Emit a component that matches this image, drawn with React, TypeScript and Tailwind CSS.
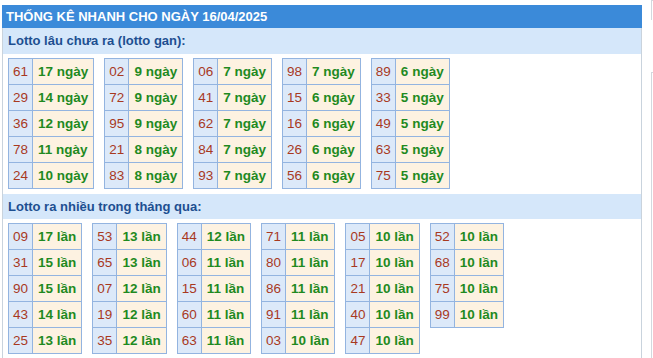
import React from "react";

const gan: [string, string][][] = [
  [["61", "17"], ["29", "14"], ["36", "12"], ["78", "11"], ["24", "10"]],
  [["02", "9"], ["72", "9"], ["95", "9"], ["21", "8"], ["83", "8"]],
  [["06", "7"], ["41", "7"], ["62", "7"], ["84", "7"], ["93", "7"]],
  [["98", "7"], ["15", "6"], ["16", "6"], ["26", "6"], ["56", "6"]],
  [["89", "6"], ["33", "5"], ["49", "5"], ["63", "5"], ["75", "5"]],
];

const nhieu: [string, string][][] = [
  [["09", "17"], ["31", "15"], ["90", "15"], ["43", "14"], ["25", "13"]],
  [["53", "13"], ["65", "13"], ["07", "12"], ["19", "12"], ["35", "12"]],
  [["44", "12"], ["06", "11"], ["15", "11"], ["60", "11"], ["63", "11"]],
  [["71", "11"], ["80", "11"], ["86", "11"], ["91", "11"], ["03", "10"]],
  [["05", "10"], ["17", "10"], ["21", "10"], ["40", "10"], ["47", "10"]],
  [["52", "10"], ["68", "10"], ["75", "10"], ["99", "10"]],
];

function LTable({ rows, unit }: { rows: [string, string][]; unit: string }) {
  return (
    <table className="border-collapse self-start">
      <tbody>
        {rows.map(([n, v], i) => (
          <tr key={i} className="h-[26px]">
            <td className="border border-[#93b4e0] bg-[#dce9f9] px-[4px] py-0 text-[13.5px] leading-[15px] text-[#a8391f]">
              {n}
            </td>
            <td className="border border-[#93b4e0] bg-[#fdf2e1] px-[5px] py-0 text-[13.5px] leading-[15px] font-bold text-[#1f8a1f]">
              {v} {unit}
            </td>
          </tr>
        ))}
      </tbody>
    </table>
  );
}

export default function App() {
  return (
    <div
      className="relative h-[358px] w-[653px] overflow-hidden bg-white"
      style={{ fontFamily: '"Liberation Sans", Arial, sans-serif' }}
    >
      <div className="absolute left-[651px] top-0 h-[20px] w-[10px] border-l border-t border-[#d3d8de]" />
      <div className="absolute left-[651px] top-[72px] h-[290px] w-[10px] border-l border-t border-[#d3d8de]" />
      <div className="ml-[2px] mt-[5px] w-[640px]">
        <div className="flex h-[23px] items-center bg-[#3b8ad9] pl-[4px] text-[13px] font-bold text-white">
          THỐNG KÊ NHANH CHO NGÀY 16/04/2025
        </div>
        <div className="flex h-[26px] items-center border-x border-[#c9d3dd] bg-[#d5e7fa] pl-[5px] text-[13px] font-bold text-[#1d4f91]">
          Lotto lâu chưa ra (lotto gan):
        </div>
        <div className="flex gap-[10px] border-x border-[#c9d3dd] px-[5px] pb-[5px] pt-[4px]">
          {gan.map((t, i) => (
            <LTable key={i} rows={t} unit="ngày" />
          ))}
        </div>
        <div className="flex h-[25px] items-center border-x border-[#c9d3dd] bg-[#d5e7fa] pl-[5px] text-[13px] font-bold text-[#1d4f91]">
          Lotto ra nhiều trong tháng qua:
        </div>
        <div className="flex gap-[10px] border-x border-[#c9d3dd] px-[5px] pb-[5px] pt-[4px]">
          {nhieu.map((t, i) => (
            <LTable key={i} rows={t} unit="lần" />
          ))}
        </div>
      </div>
    </div>
  );
}
